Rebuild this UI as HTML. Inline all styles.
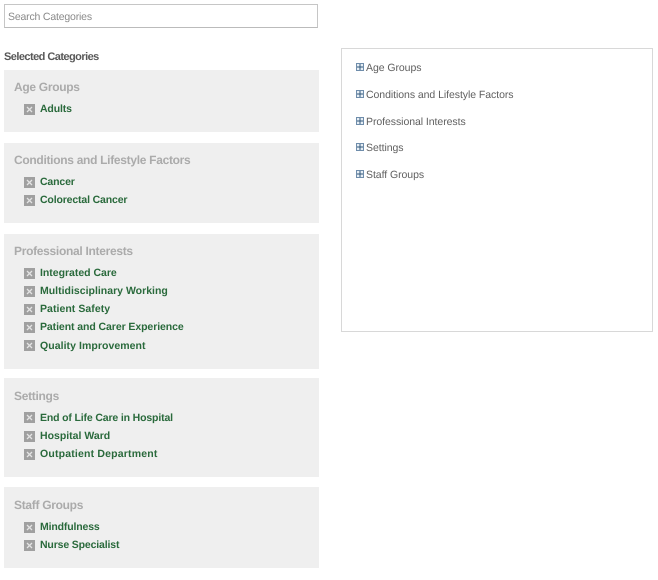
<!DOCTYPE html>
<html><head><meta charset="utf-8"><style>
html,body{margin:0;padding:0;background:#fff}
body{width:658px;height:580px;position:relative;overflow:hidden;font-family:"Liberation Sans",sans-serif;text-rendering:geometricPrecision}
#w{left:0;top:0;width:658px;height:580px;filter:blur(.35px)}
div{position:absolute;white-space:nowrap;box-sizing:border-box}
.p{left:4px;width:315px;background:#efefef}
.h{left:14px;font-size:12px;font-weight:bold;color:#ababab;letter-spacing:-.3px;line-height:16px}
.t{left:40px;font-size:10.5px;font-weight:bold;color:#2a6a3c;letter-spacing:-.15px;line-height:14px}
.x{left:24px;width:11px;height:11px;background:#a0a0a0}
.x svg{position:absolute;left:0;top:0}
.r{left:366px;font-size:10.5px;color:#5f5f5f;letter-spacing:-.06px;line-height:14px}
.b{left:356px;width:8px;height:8px;border:1px solid #6f8dab;background:#e6eef5}
.b svg{position:absolute;left:0;top:0}
</style></head><body><div id="w">
<div style="left:4px;top:4px;width:314px;height:24px;border:1px solid #c6c6c6;border-bottom-color:#bbb"></div>
<div style="left:8px;top:10px;font-size:10.5px;line-height:14px;color:#8a8a8a;letter-spacing:-.18px">Search Categories</div>
<div style="left:4px;top:49px;font-size:11px;line-height:16px;font-weight:bold;color:#585858;letter-spacing:-.55px">Selected Categories</div>

<div class="p" style="top:70px;height:62px"></div>
<div class="h" style="top:79px">Age Groups</div>
<div class="x" style="top:104px"><svg width="11" height="11"><path d="M3 3l5 5M8 3l-5 5" stroke="#e4e4e4" stroke-width="1.3"/></svg></div>
<div class="t" style="top:102px">Adults</div>

<div class="p" style="top:143px;height:80px"></div>
<div class="h" style="top:152px">Conditions and Lifestyle Factors</div>
<div class="x" style="top:177px"><svg width="11" height="11"><path d="M3 3l5 5M8 3l-5 5" stroke="#e4e4e4" stroke-width="1.3"/></svg></div>
<div class="t" style="top:175px">Cancer</div>
<div class="x" style="top:195px"><svg width="11" height="11"><path d="M3 3l5 5M8 3l-5 5" stroke="#e4e4e4" stroke-width="1.3"/></svg></div>
<div class="t" style="top:193px">Colorectal Cancer</div>

<div class="p" style="top:233.5px;height:135px"></div>
<div class="h" style="top:243px">Professional Interests</div>
<div class="x" style="top:268px"><svg width="11" height="11"><path d="M3 3l5 5M8 3l-5 5" stroke="#e4e4e4" stroke-width="1.3"/></svg></div>
<div class="t" style="top:266px;letter-spacing:-.02px">Integrated Care</div>
<div class="x" style="top:286px"><svg width="11" height="11"><path d="M3 3l5 5M8 3l-5 5" stroke="#e4e4e4" stroke-width="1.3"/></svg></div>
<div class="t" style="top:284px;letter-spacing:.01px">Multidisciplinary Working</div>
<div class="x" style="top:304px"><svg width="11" height="11"><path d="M3 3l5 5M8 3l-5 5" stroke="#e4e4e4" stroke-width="1.3"/></svg></div>
<div class="t" style="top:302px;letter-spacing:.05px">Patient Safety</div>
<div class="x" style="top:322px"><svg width="11" height="11"><path d="M3 3l5 5M8 3l-5 5" stroke="#e4e4e4" stroke-width="1.3"/></svg></div>
<div class="t" style="top:320px;letter-spacing:-.08px">Patient and Carer Experience</div>
<div class="x" style="top:340px"><svg width="11" height="11"><path d="M3 3l5 5M8 3l-5 5" stroke="#e4e4e4" stroke-width="1.3"/></svg></div>
<div class="t" style="top:339px;letter-spacing:.06px">Quality Improvement</div>

<div class="p" style="top:378px;height:99px"></div>
<div class="h" style="top:388px">Settings</div>
<div class="x" style="top:412px"><svg width="11" height="11"><path d="M3 3l5 5M8 3l-5 5" stroke="#e4e4e4" stroke-width="1.3"/></svg></div>
<div class="t" style="top:411px">End of Life Care in Hospital</div>
<div class="x" style="top:431px"><svg width="11" height="11"><path d="M3 3l5 5M8 3l-5 5" stroke="#e4e4e4" stroke-width="1.3"/></svg></div>
<div class="t" style="top:429px;letter-spacing:0">Hospital Ward</div>
<div class="x" style="top:449px"><svg width="11" height="11"><path d="M3 3l5 5M8 3l-5 5" stroke="#e4e4e4" stroke-width="1.3"/></svg></div>
<div class="t" style="top:447px;letter-spacing:.18px">Outpatient Department</div>

<div class="p" style="top:487px;height:81px"></div>
<div class="h" style="top:497px">Staff Groups</div>
<div class="x" style="top:522px"><svg width="11" height="11"><path d="M3 3l5 5M8 3l-5 5" stroke="#e4e4e4" stroke-width="1.3"/></svg></div>
<div class="t" style="top:520px">Mindfulness</div>
<div class="x" style="top:540px"><svg width="11" height="11"><path d="M3 3l5 5M8 3l-5 5" stroke="#e4e4e4" stroke-width="1.3"/></svg></div>
<div class="t" style="top:538px">Nurse Specialist</div>

<div style="left:341px;top:48px;width:312px;height:284px;border:1px solid #d8d8d8"></div>
<div class="b" style="top:63px"><svg width="6" height="6"><path d="M0 3h6M3 0v6" stroke="#33587c" stroke-width="1"/></svg></div>
<div class="r" style="top:61px">Age Groups</div>
<div class="b" style="top:90px"><svg width="6" height="6"><path d="M0 3h6M3 0v6" stroke="#33587c" stroke-width="1"/></svg></div>
<div class="r" style="top:88px">Conditions and Lifestyle Factors</div>
<div class="b" style="top:117px"><svg width="6" height="6"><path d="M0 3h6M3 0v6" stroke="#33587c" stroke-width="1"/></svg></div>
<div class="r" style="top:115px">Professional Interests</div>
<div class="b" style="top:143px"><svg width="6" height="6"><path d="M0 3h6M3 0v6" stroke="#33587c" stroke-width="1"/></svg></div>
<div class="r" style="top:141px">Settings</div>
<div class="b" style="top:170px"><svg width="6" height="6"><path d="M0 3h6M3 0v6" stroke="#33587c" stroke-width="1"/></svg></div>
<div class="r" style="top:168px">Staff Groups</div>
</div></body></html>
